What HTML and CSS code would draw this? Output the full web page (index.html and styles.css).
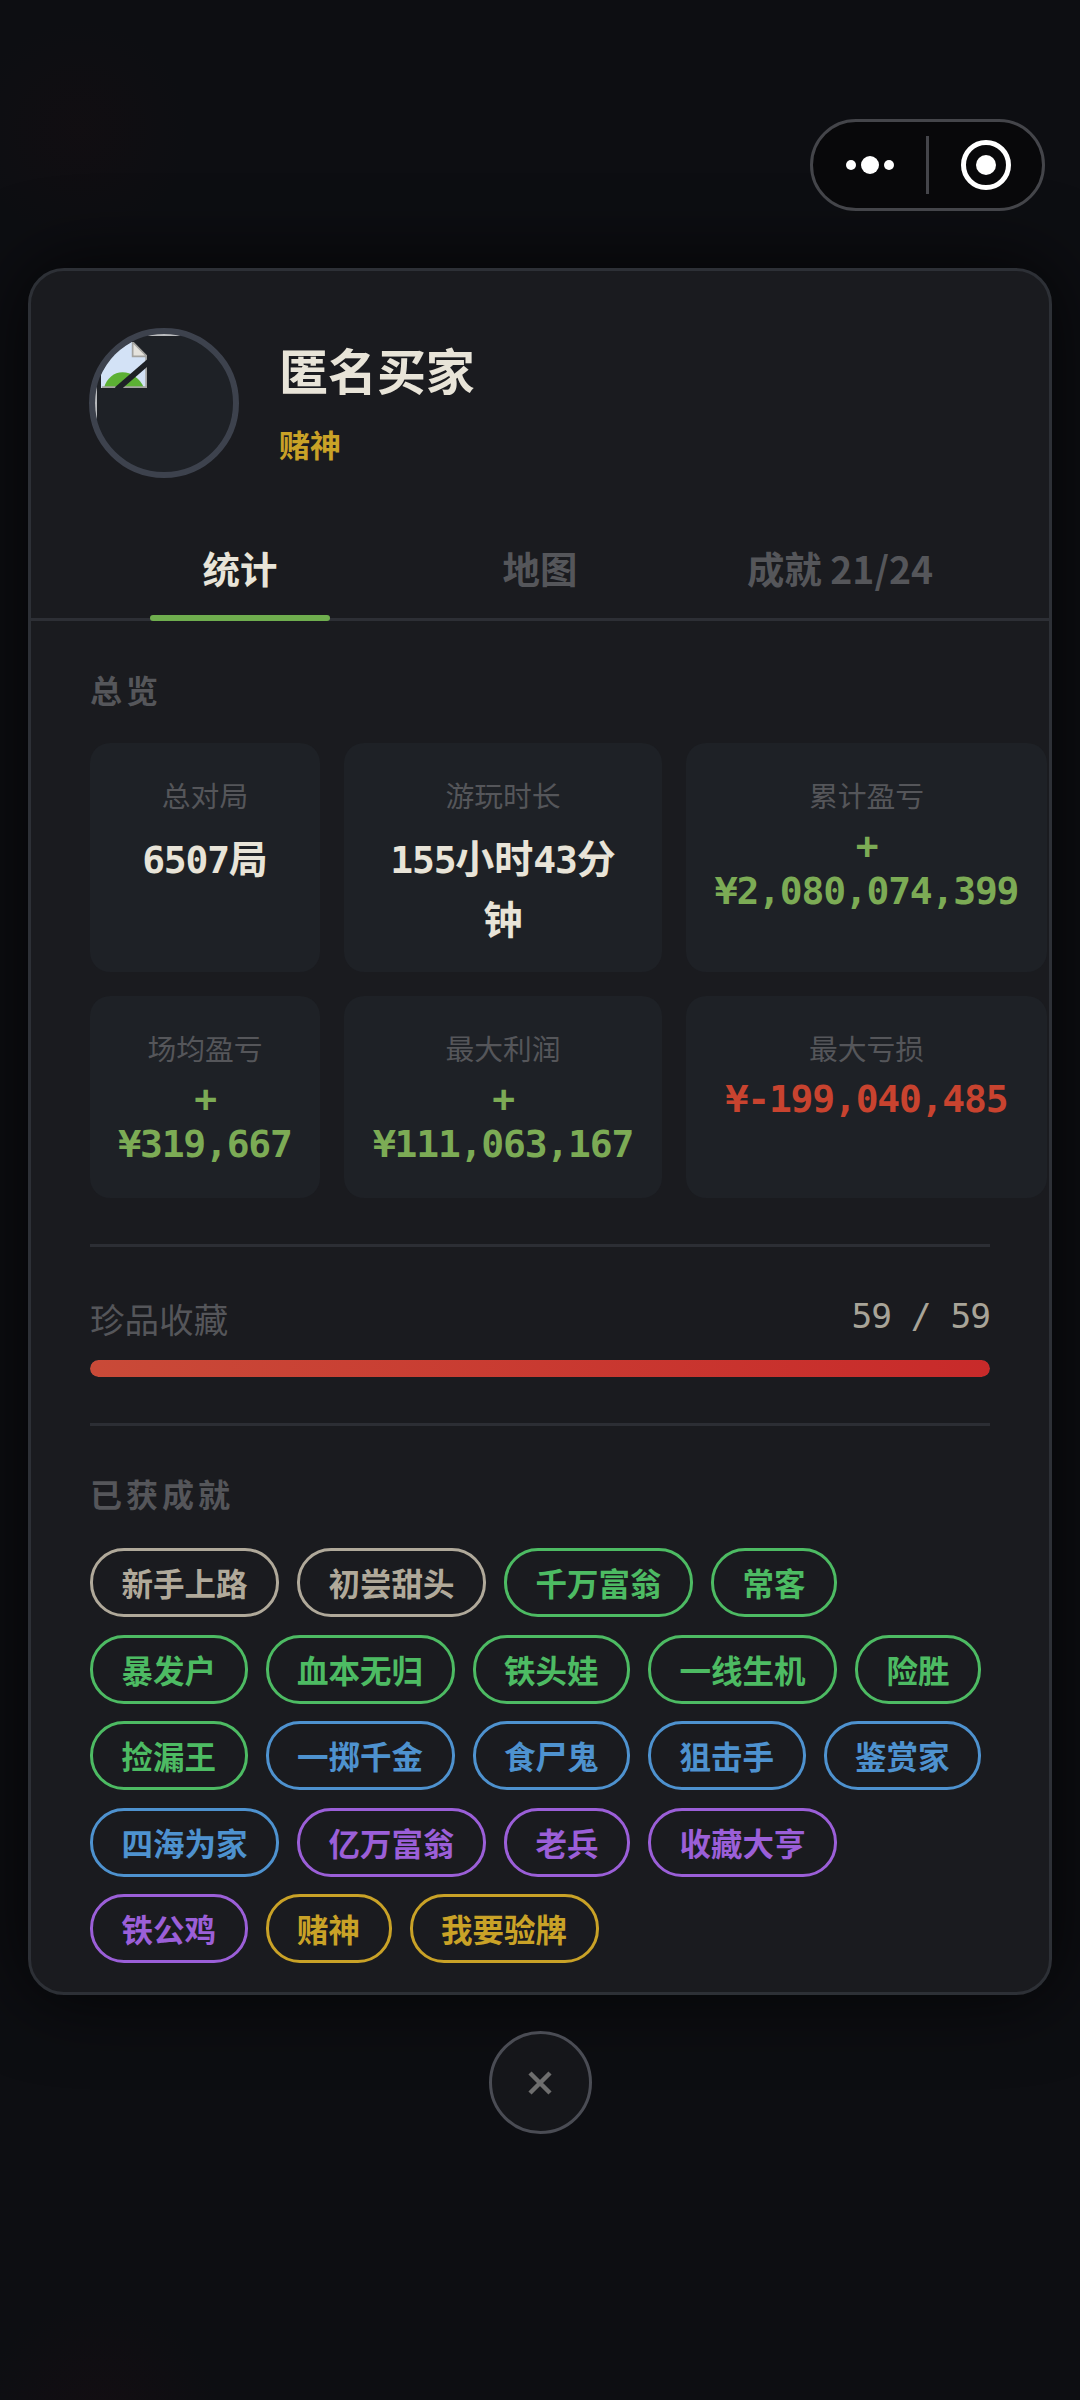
FILE: index.html
```html
<!DOCTYPE html>
<html lang="zh-CN">
<head>
    <meta charset="UTF-8">
    <meta name="viewport" content="width=device-width, initial-scale=1.0">
    <title>匿名买家</title>
    <link rel="stylesheet" href="styles.css">
</head>
<body>
    <header class="topbar">
        <div class="capsule">
            <div class="capsule-part">
                <svg width="60" height="24" viewBox="0 0 60 24">
                    <circle cx="11" cy="12" r="5" fill="#fff"/>
                    <circle cx="30" cy="12" r="9" fill="#fff"/>
                    <circle cx="49" cy="12" r="5" fill="#fff"/>
                </svg>
            </div>
            <div class="capsule-line"></div>
            <div class="capsule-part">
                <svg width="50" height="50" viewBox="0 0 50 50">
                    <circle cx="25" cy="25" r="22.5" fill="none" stroke="#fff" stroke-width="5"/>
                    <circle cx="25" cy="25" r="10" fill="#fff"/>
                </svg>
            </div>
        </div>
    </header>

    <main class="card">
        <section class="profile">
            <div class="avatar">
                <div class="avatar-img">
                    <svg class="broken-img" width="46" height="46" viewBox="0 0 16 16">
                        <path d="M0 0H11L16 5V16H0Z" fill="#d3e2f6"/>
                        <path d="M1 16C2 12.5 4.5 10.5 7.5 10.5C10.5 10.5 13.5 12.5 15 16Z" fill="#5cb034"/>
                        <path d="M11 0V5H16Z" fill="#e4e2dc"/>
                        <path d="M11 0V5H16L11 0ZM15.7 5V15.7H.3" fill="none" stroke="#a3a3a0" stroke-width=".6"/>
                        <path d="M5.5 16.5L17 6.5" stroke="#1e2126" stroke-width="2"/>
                    </svg>
                </div>
            </div>
            <div class="profile-info">
                <h1 class="profile-name">匿名买家</h1>
                <div class="profile-title">赌神</div>
            </div>
        </section>

        <nav class="tabs">
            <div class="tab active">统计</div>
            <div class="tab">地图</div>
            <div class="tab">成就 21/24</div>
        </nav>

        <div class="content">
            <h3 class="section-title">总览</h3>
            <div class="stats">
                <div class="stat">
                    <div class="stat-label">总对局</div>
                    <div class="stat-value">6507<span class="unit">局</span></div>
                </div>
                <div class="stat">
                    <div class="stat-label">游玩时长</div>
                    <div class="stat-value">155<span class="unit">小时</span>43<span class="unit">分</span><br><span class="unit">钟</span></div>
                </div>
                <div class="stat">
                    <div class="stat-label">累计盈亏</div>
                    <div class="stat-money up">+<br>¥2,080,074,399</div>
                </div>
                <div class="stat">
                    <div class="stat-label">场均盈亏</div>
                    <div class="stat-money up">+<br>¥319,667</div>
                </div>
                <div class="stat">
                    <div class="stat-label">最大利润</div>
                    <div class="stat-money up">+<br>¥111,063,167</div>
                </div>
                <div class="stat">
                    <div class="stat-label">最大亏损</div>
                    <div class="stat-money down">¥-199,040,485</div>
                </div>
            </div>

            <hr class="divider">

            <div class="collect-row">
                <span class="collect-label">珍品收藏</span>
                <span class="collect-count">59 / 59</span>
            </div>
            <div class="progress"><div class="progress-fill" style="width: 100%"></div></div>

            <hr class="divider">

            <h3 class="section-title">已获成就</h3>
            <div class="badges">
                <span class="badge common">新手上路</span>
                <span class="badge common">初尝甜头</span>
                <span class="badge green">千万富翁</span>
                <span class="badge green">常客</span>
                <span class="badge green">暴发户</span>
                <span class="badge green">血本无归</span>
                <span class="badge green">铁头娃</span>
                <span class="badge green">一线生机</span>
                <span class="badge green">险胜</span>
                <span class="badge green">捡漏王</span>
                <span class="badge blue">一掷千金</span>
                <span class="badge blue">食尸鬼</span>
                <span class="badge blue">狙击手</span>
                <span class="badge blue">鉴赏家</span>
                <span class="badge blue">四海为家</span>
                <span class="badge purple">亿万富翁</span>
                <span class="badge purple">老兵</span>
                <span class="badge purple">收藏大亨</span>
                <span class="badge purple">铁公鸡</span>
                <span class="badge gold">赌神</span>
                <span class="badge gold">我要验牌</span>
            </div>
        </div>
    </main>

    <button class="close" type="button" aria-label="关闭">
        <svg width="26" height="26" viewBox="0 0 26 26">
            <path d="M3 3L23 23M23 3L3 23" stroke="#6e6e6e" stroke-width="4.5" fill="none"/>
        </svg>
    </button>
</body>
</html>
```

FILE: styles.css
```css
* {
    box-sizing: border-box;
}
html, body {
    margin: 0;
    padding: 0;
}
body {
    width: 1080px;
    height: 2400px;
    overflow: hidden;
    font-family: "Noto Sans CJK SC", "Noto Sans", sans-serif;
    color: #e8e4d8;
    background-color: #0d0e12;
    background-image:
        radial-gradient(circle at 80px 130px, rgba(70, 12, 12, 0.07), transparent 110px),
        radial-gradient(circle at 100px 2420px, rgba(70, 12, 20, 0.1), transparent 120px);
}

/* top bar */
.topbar {
    display: flex;
    justify-content: flex-end;
    padding: 119px 35px 0 0;
}
.capsule {
    display: flex;
    align-items: center;
    width: 235px;
    height: 92px;
    background: #08080a;
    border: 3px solid #44454a;
    border-radius: 46px;
}
.capsule-part {
    flex: 1;
    display: flex;
    justify-content: center;
    align-items: center;
}
.capsule-part svg {
    display: block;
}
.capsule-line {
    width: 3px;
    height: 58px;
    background: #44454a;
}

/* card */
.card {
    width: 1024px;
    height: 1727px;
    margin: 57px 28px 0;
    background: #1a1b1f;
    border: 3px solid #2d3036;
    border-radius: 36px;
    overflow: hidden;
    box-shadow: 0 0 80px rgba(0, 0, 0, 0.8);
}
.profile {
    display: flex;
    align-items: center;
    gap: 40px;
    padding: 57px 59px 0 58px;
}
.avatar {
    width: 150px;
    height: 150px;
    flex-shrink: 0;
    border: 6px solid #3d424d;
    border-radius: 50%;
    background: #1e2126;
    overflow: hidden;
}
.avatar-img {
    width: 138px;
    height: 138px;
    padding: 6px 0 0 4px;
    border-top: 2px solid #b9bbbe;
    border-left: 2px solid #b9bbbe;
}
.broken-img {
    display: block;
}
.profile-info {
    padding-bottom: 6px;
}
.profile-name {
    margin: 0;
    font-size: 48.96px;
    line-height: 70px;
    font-weight: 700;
    color: #e8e4d8;
}
.profile-title {
    margin-top: 18px;
    font-size: 31px;
    line-height: 44px;
    font-weight: 700;
    color: #c9a227;
}

/* tabs */
.tabs {
    display: flex;
    margin-top: 64px;
    padding: 0 59px;
    border-bottom: 3px solid #2d2f35;
}
.tab {
    position: relative;
    flex: 1;
    padding-bottom: 24px;
    text-align: center;
    font-size: 37.44px;
    line-height: 52px;
    font-weight: 700;
    color: #55565a;
}
.tab.active {
    color: #e8e4d8;
}
.tab.active::after {
    content: "";
    position: absolute;
    left: 20%;
    width: 60%;
    bottom: -3px;
    height: 6px;
    border-radius: 3px;
    background: #6fae4e;
}

/* stats */
.content {
    padding: 46px 59px 0;
}
.section-title {
    margin: 0;
    font-size: 32px;
    line-height: 45px;
    font-weight: 700;
    letter-spacing: 4px;
    color: #55565a;
}
.stats {
    display: grid;
    grid-template-columns: 230px 318px 361px;
    grid-template-rows: 229px 202px;
    column-gap: 24px;
    row-gap: 24px;
    margin-top: 31px;
}
.stat {
    padding: 32px 10px 0;
    background: #1e2126;
    border-radius: 20px;
    text-align: center;
}
.stat-label {
    font-size: 28.8px;
    line-height: 40px;
    color: #55565a;
}
.stat-value {
    margin-top: 13px;
    font-family: "DejaVu Sans Mono", "Noto Sans CJK SC", monospace;
    font-size: 38px;
    letter-spacing: -1.2px;
    line-height: 57px;
    font-weight: 700;
    color: #e8e4d8;
}
.unit {
    font-family: "Noto Sans CJK SC", sans-serif;
    font-size: 39px;
    letter-spacing: 0;
}
.stat-money {
    margin-top: 9px;
    font-family: "DejaVu Sans Mono", monospace;
    font-size: 38px;
    letter-spacing: -1.2px;
    line-height: 45px;
    font-weight: 700;
}
.up {
    color: #7cab55;
}
.down {
    color: #c8432f;
}

.divider {
    height: 3px;
    margin: 46px 0 47px;
    border: none;
    background: #2c2e34;
}
.divider + .section-title {
    margin-top: -2px;
}

/* collection */
.collect-row {
    display: flex;
    justify-content: space-between;
    align-items: flex-start;
    margin-top: 46px;
}
.collect-label {
    font-size: 34.56px;
    line-height: 49px;
    color: #55565a;
}
.collect-count {
    font-family: "DejaVu Sans Mono", monospace;
    font-size: 34.56px;
    letter-spacing: -1px;
    line-height: 44px;
    color: #a8a498;
}
.progress {
    height: 17px;
    margin-top: 17px;
    border-radius: 9px;
    background: #2c2e34;
    overflow: hidden;
}
.progress-fill {
    height: 100%;
    border-radius: 9px;
    background: linear-gradient(90deg, #c94a38, #c82a2a);
}

/* badges */
.badges {
    display: flex;
    flex-wrap: wrap;
    column-gap: 18px;
    row-gap: 17.5px;
    margin-top: 32px;
}
.badge {
    padding: 0 28.5px;
    border: 3px solid currentColor;
    border-radius: 34px;
    font-size: 31.5px;
    line-height: 63px;
    font-weight: 700;
}
.common {
    color: #b0a99a;
}
.green {
    color: #4dbb63;
}
.blue {
    color: #4e92cf;
}
.purple {
    color: #9b5fd8;
}
.gold {
    color: #c9a227;
}

/* close button */
.close {
    display: flex;
    justify-content: center;
    align-items: center;
    width: 103px;
    height: 103px;
    margin: 36px auto 0;
    padding: 0;
    background: #15161a;
    border: 3px solid #4a4c54;
    border-radius: 50%;
}
```
